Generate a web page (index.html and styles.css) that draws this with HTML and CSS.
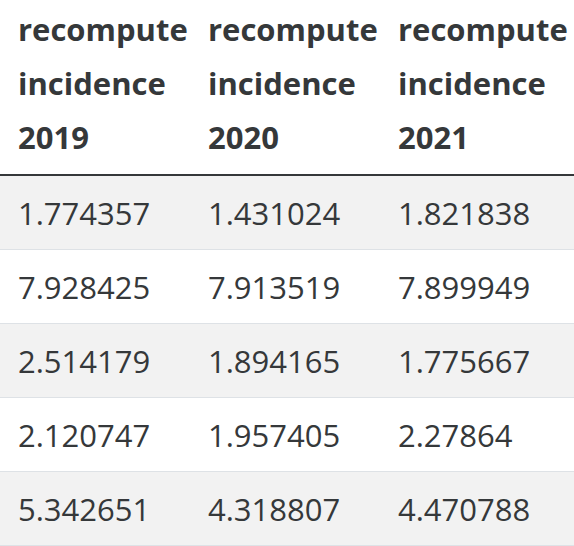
FILE: index.html
```html
<!DOCTYPE html>
<html>
<head>
<meta charset="utf-8">
<link rel="stylesheet" href="styles.css">
</head>
<body>
<table class="data">
  <thead>
    <tr>
      <th class="hcell">recompute incidence 2019</th>
      <th class="hcell">recompute incidence 2020</th>
      <th class="hcell hlast">recompute incidence 2021</th>
    </tr>
  </thead>
  <tbody>
    <tr class="odd"><td class="cell">1.774357</td><td class="cell">1.431024</td><td class="cell">1.821838</td></tr>
    <tr class="even"><td class="cell">7.928425</td><td class="cell">7.913519</td><td class="cell">7.899949</td></tr>
    <tr class="odd"><td class="cell">2.514179</td><td class="cell">1.894165</td><td class="cell">1.775667</td></tr>
    <tr class="even"><td class="cell">2.120747</td><td class="cell">1.957405</td><td class="cell">2.27864</td></tr>
    <tr class="odd"><td class="cell">5.342651</td><td class="cell">4.318807</td><td class="cell">4.470788</td></tr>
  </tbody>
</table>
</body>
</html>
```
FILE: styles.css
```css
html, body {
  margin: 0;
  padding: 0;
  background: #ffffff;
}
.data {
  border-collapse: collapse;
  table-layout: fixed;
  width: 574px;
  font-family: "Open Sans", "Noto Sans", sans-serif;
  font-size: 31px;
  line-height: 54px;
  color: #35383a;
}
.hcell {
  width: 190px;
  box-sizing: border-box;
  text-align: left;
  font-weight: 700;
  padding: 2px 18px 10px;
  border-bottom: 2px solid #35383a;
  vertical-align: bottom;
}
.hlast {
  width: 194px;
  padding-right: 0;
}
.cell {
  padding: 9.5px 18px;
  border-bottom: 1px solid #dee2e6;
  white-space: nowrap;
}
.odd {
  background: #f2f2f2;
}
.even {
  background: #ffffff;
}
```
